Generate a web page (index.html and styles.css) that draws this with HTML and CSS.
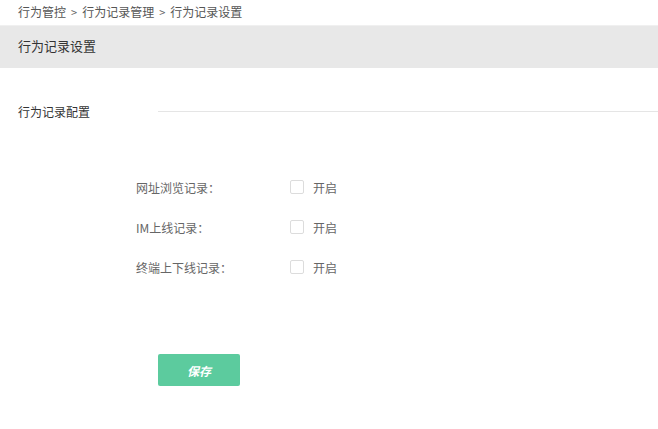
FILE: index.html
```html
<!DOCTYPE html>
<html lang="zh">
<head>
<meta charset="utf-8">
<title>行为记录设置</title>
<link rel="stylesheet" href="styles.css">
</head>
<body>
<div class="breadcrumb">行为管控<span class="sep">&gt;</span>行为记录管理<span class="sep">&gt;</span>行为记录设置</div>
<div class="page-title">行为记录设置</div>
<div class="section">
  <div class="section-head">
    <span class="section-title">行为记录配置</span>
    <span class="section-line"></span>
  </div>
  <div class="form">
    <div class="row">
      <span class="label">网址浏览记录：</span>
      <label class="check"><span class="box"></span><span>开启</span></label>
    </div>
    <div class="row">
      <span class="label">IM上线记录：</span>
      <label class="check"><span class="box"></span><span>开启</span></label>
    </div>
    <div class="row">
      <span class="label">终端上下线记录：</span>
      <label class="check"><span class="box"></span><span>开启</span></label>
    </div>
  </div>
  <div class="actions">
    <button class="btn-save">保存</button>
  </div>
</div>
</body>
</html>
```
FILE: styles.css
```css
html, body {
  margin: 0;
  padding: 0;
  background: #fff;
  font-family: "Noto Sans CJK SC", "Noto Sans", sans-serif;
  font-size: 12px;
  color: #555;
}
.breadcrumb {
  height: 25px;
  line-height: 23px;
  padding-left: 18px;
  color: #555;
  font-size: 12px;
}
.breadcrumb .sep {
  font-size: 11px;
  color: #666;
  margin: 0 5px;
}
.page-title {
  height: 42px;
  line-height: 40px;
  background: #e8e8e8;
  border-top: 1px solid #f0f0f0;
  padding-left: 18px;
  font-size: 13px;
  color: #333;
}
.section-head {
  display: flex;
  align-items: center;
  margin-top: 33px;
  height: 20px;
}
.section-title {
  width: 140px;
  padding-left: 18px;
  font-size: 12px;
  color: #333;
}
.section-line {
  flex: 1;
  height: 1px;
  background: #e5e5e5;
}
.form {
  margin-top: 56px;
  padding-left: 136px;
  display: flex;
  flex-direction: column;
  gap: 20px;
}
.row {
  display: flex;
  align-items: center;
  height: 20px;
}
.label {
  width: 154px;
  color: #666;
}
.check {
  display: flex;
  align-items: center;
  gap: 9px;
  color: #666;
}
.box {
  width: 12px;
  height: 12px;
  border: 1px solid #dcdcdc;
  border-radius: 2px;
  background: #fff;
}
.actions {
  margin-top: 77px;
  padding-left: 158px;
}
.btn-save {
  width: 82px;
  height: 32px;
  border: none;
  border-radius: 2px;
  background: #5ccb9e;
  color: #fff;
  font-family: "Noto Sans CJK SC", sans-serif;
  font-size: 12px;
  font-weight: bold;
  font-style: italic;
}
```
